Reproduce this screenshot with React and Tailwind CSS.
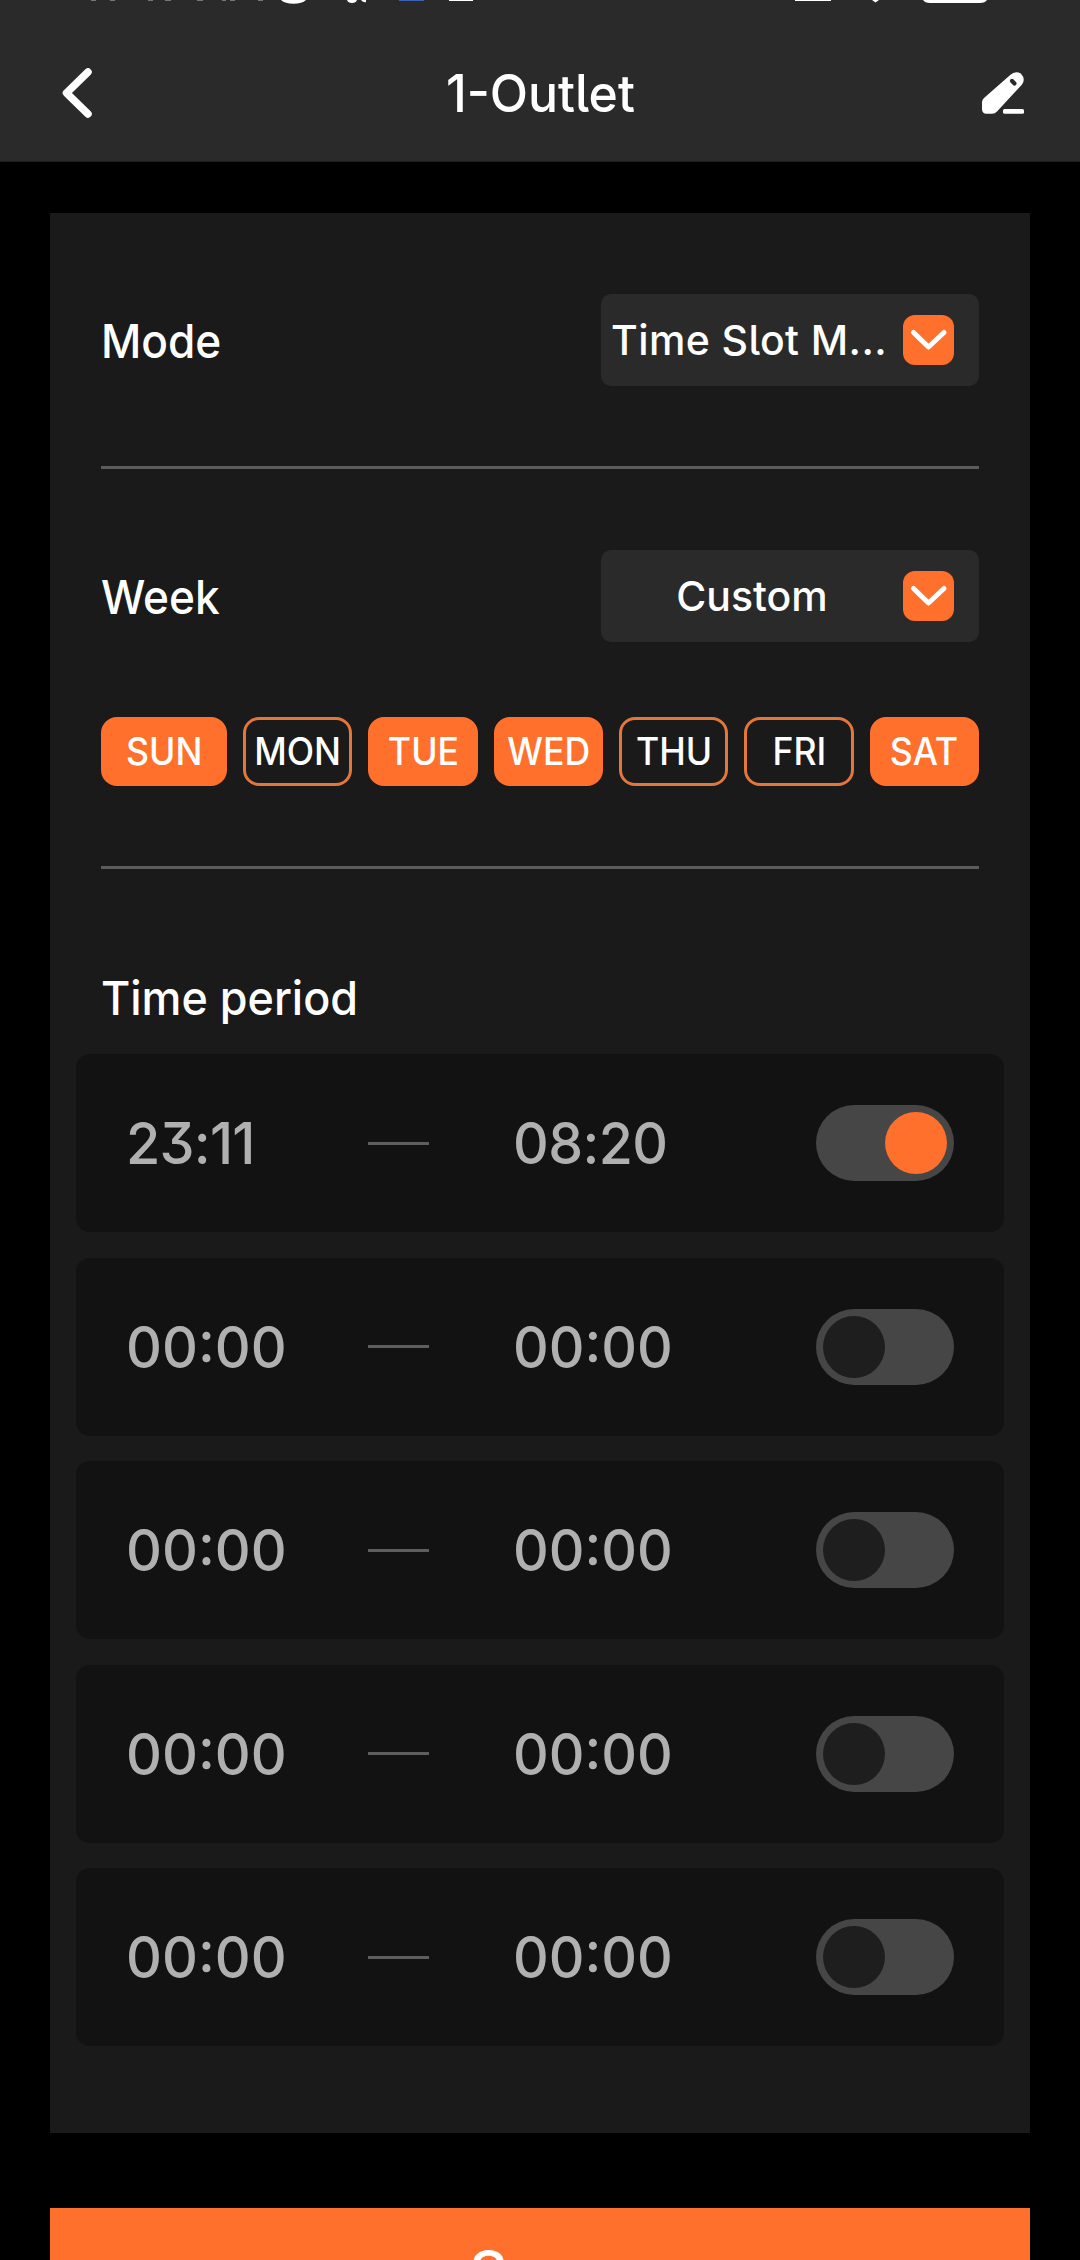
import React, { useState } from "react";

const days = [
    { id: "SUN", active: true },
    { id: "MON", active: false },
    { id: "TUE", active: true },
    { id: "WED", active: true },
    { id: "THU", active: false },
    { id: "FRI", active: false },
    { id: "SAT", active: true },
];

const slots = [
    { id: 1, start: "23:11", end: "08:20", on: true },
    { id: 2, start: "00:00", end: "00:00", on: false },
    { id: 3, start: "00:00", end: "00:00", on: false },
    { id: 4, start: "00:00", end: "00:00", on: false },
    { id: 5, start: "00:00", end: "00:00", on: false },
];

// lower edge of the system status bar
const StatusBar = () => {
    return (
        <svg className="block w-full h-1.5 shrink-0" viewBox="0 0 1080 6">
            <g fill="#777777">
                <rect x="91" y="0" width="5" height="1" />
                <rect x="110" y="0" width="5" height="1" />
                <rect x="148" y="0" width="5" height="1" />
                <rect x="165" y="0" width="6" height="1" />
                <rect x="197" y="0" width="6" height="1" />
                <rect x="222" y="0" width="4" height="1" />
                <rect x="230" y="0" width="5" height="1" />
                <rect x="258" y="0" width="5" height="1" />
            </g>
            <g fill="#ffffff">
                <path d="M281 0h25q-4 3.8-12.500 3.800T281 0z" />
                <path d="M347 0h10q-1 3-5 3t-5-3z" />
                <path d="M361 0h5v2.200q-3 .5-5-2.200z" />
                <rect x="449" y="0" width="24" height="1" />
                <rect x="795" y="0" width="36" height="1" />
                <path d="M872 0h7l-3.500 2.500z" />
                <path d="M923 0h64q-2 3-7 3h-50q-5 0-7-3z" />
            </g>
            <rect x="399" y="0" width="25" height="1" fill="#3f62b5" />
        </svg>
    );
};

const Header = () => {
    return (
        <header className="w-full h-[162px] flex flex-col bg-[#2a2a2a] border-b border-[#1c1c1c] shrink-0">
            <StatusBar />
            <div className="flex-1 flex flex-row justify-between items-center pl-[62px] pr-[56px] pt-[19px]">
                <svg className="w-[30px] h-[50px] mr-[7px]" viewBox="0 0 30 50" fill="none" stroke="#ffffff" strokeWidth="7.500" strokeLinecap="round" strokeLinejoin="round">
                    <path d="M26 4L4.500 25L26 46" />
                </svg>
                <h1 className="pt-0.5 text-[52px] leading-[60px] font-medium scale-x-[0.96]">1-Outlet</h1>
                <svg className="w-[42px] h-[42px]" viewBox="0 0 42 42">
                    <path d="M2 26L28.500 2.800Q33 -1.500 38.800 1.500Q44 7 40 12.500L15 39.500Q13 41.700 10 41.700H4.500Q0 41.700 0 37V30.500Q0 27.800 2 26z" fill="#ffffff" />
                    <path d="M30 9L32.500 11.500" stroke="#2a2a2a" strokeWidth="4.200" strokeLinecap="round" />
                    <rect x="21" y="37" width="21" height="4.700" rx="1.500" fill="#ffffff" />
                </svg>
            </div>
        </header>
    );
};

const Select = ({ className, children }) => {
    return (
        <button className="w-[378px] h-[92px] pl-2.5 pr-[25px] flex flex-row items-center justify-between bg-[#2a2a2a] rounded-[10px]">
            <span className={`flex-1 text-[41px] leading-[50px] font-medium whitespace-nowrap ${className}`}>{children}</span>
            <span className="w-[51px] h-[50px] shrink-0 flex justify-center items-center bg-[#ff702c] rounded-[12px]">
                <svg className="w-[51px] h-[50px]" viewBox="0 0 51 50" fill="none" stroke="#ffffff" strokeWidth="5" strokeLinecap="round" strokeLinejoin="round">
                    <path d="M10.500 17.500L25.500 32L41 17.500" />
                </svg>
            </span>
        </button>
    );
};

const Label = ({ children }) => {
    return <p className="pt-0.5 text-[47px] leading-[60px] font-medium origin-left scale-x-[0.94]">{children}</p>;
};

const Divider = () => {
    return <div className="w-full h-[3px] bg-[#5c5c5c] shrink-0"></div>;
};

const Toggle = ({ on, onClick }) => {
    return (
        <button onClick={onClick} className={`w-[138px] h-[76px] p-[7px] flex items-center rounded-full bg-[#464646] ${on ? "justify-end" : "justify-start"}`}>
            <span className={`w-[62px] h-[62px] rounded-full ${on ? "bg-[#ff702c]" : "bg-[#1e1e1e]"}`}></span>
        </button>
    );
};

const App = () => {
    const [week, setWeek] = useState(days);
    const [times, setTimes] = useState(slots);

    const toggleDay = (id) => {
        setWeek(week.map((d) => (d.id === id ? { ...d, active: !d.active } : d)));
    };
    const toggleSlot = (id) => {
        setTimes(times.map((t) => (t.id === id ? { ...t, on: !t.on } : t)));
    };

    return (
        <div className="w-[1080px] h-[2260px] overflow-hidden flex flex-col bg-black text-white font-['Inter','Liberation_Sans',sans-serif] [font-feature-settings:'cv05','cv09']">
            <Header />
            <main className="flex flex-col px-[50px] pt-[51px]">
                <section className="w-full h-[1920px] flex flex-col bg-[#1a1a1a]">
                    <div className="flex flex-col px-[51px]">
                        <div className="flex flex-row justify-between items-center pt-[81px] pb-20">
                            <Label>Mode</Label>
                            <Select className="text-left tracking-[0.4px]">Time Slot M...</Select>
                        </div>
                        <Divider />
                        <div className="flex flex-row justify-between items-center pt-[81px]">
                            <Label>Week</Label>
                            <Select className="text-center pr-2.5">Custom</Select>
                        </div>
                        <div className="flex flex-row gap-4 mt-[75px] mb-20">
                            {
                                week.map((day, index) => {
                                    return (
                                        <button key={day.id} onClick={() => { toggleDay(day.id) }} className={`h-[69px] flex justify-center items-center rounded-[16px] border-[3px] text-[37.5px] leading-[44px] font-medium ${index === 0 ? "w-[126px] shrink-0" : "flex-1 min-w-0"} ${day.active ? "bg-[#ff702c] border-[#ff702c]" : "border-[#e2763d]"}`}>
                                            <span className="scale-x-[0.95]">{day.id}</span>
                                        </button>
                                    );
                                })
                            }
                        </div>
                        <Divider />
                        <h2 className="pt-[99px] pb-[26px] text-[47px] leading-[60px] font-medium origin-left scale-x-[0.955]">Time period</h2>
                    </div>
                    <div className="flex flex-col gap-[25.500px] px-[26px]">
                        {
                            times.map((item) => {
                                return (
                                    <div key={item.id} className="w-full h-[178px] flex flex-row items-center pl-[50px] pr-[50px] rounded-[14px] bg-[#121212] text-[58px] leading-[70px] font-medium text-[#b0b0b0]">
                                        <span className={`w-[242px] origin-left scale-x-[0.96] ${item.on ? "tracking-[-0.8px]" : ""}`}>{item.start}</span>
                                        <span className="w-[61px] h-[3px] bg-[#5e5e5e]"></span>
                                        <span className={`flex-1 ml-[84px] origin-left scale-x-[0.955] ${item.on ? "tracking-[-0.6px]" : ""}`}>{item.end}</span>
                                        <Toggle on={item.on} onClick={() => { toggleSlot(item.id) }} />
                                    </div>
                                );
                            })
                        }
                    </div>
                </section>
                <button className="w-full h-[140px] mt-[75px] pt-[34px] flex justify-center items-start bg-[#ff702c] text-[59px] leading-[60px] font-medium tracking-[0.8px]">Save</button>
            </main>
        </div>
    );
};

export default App;
